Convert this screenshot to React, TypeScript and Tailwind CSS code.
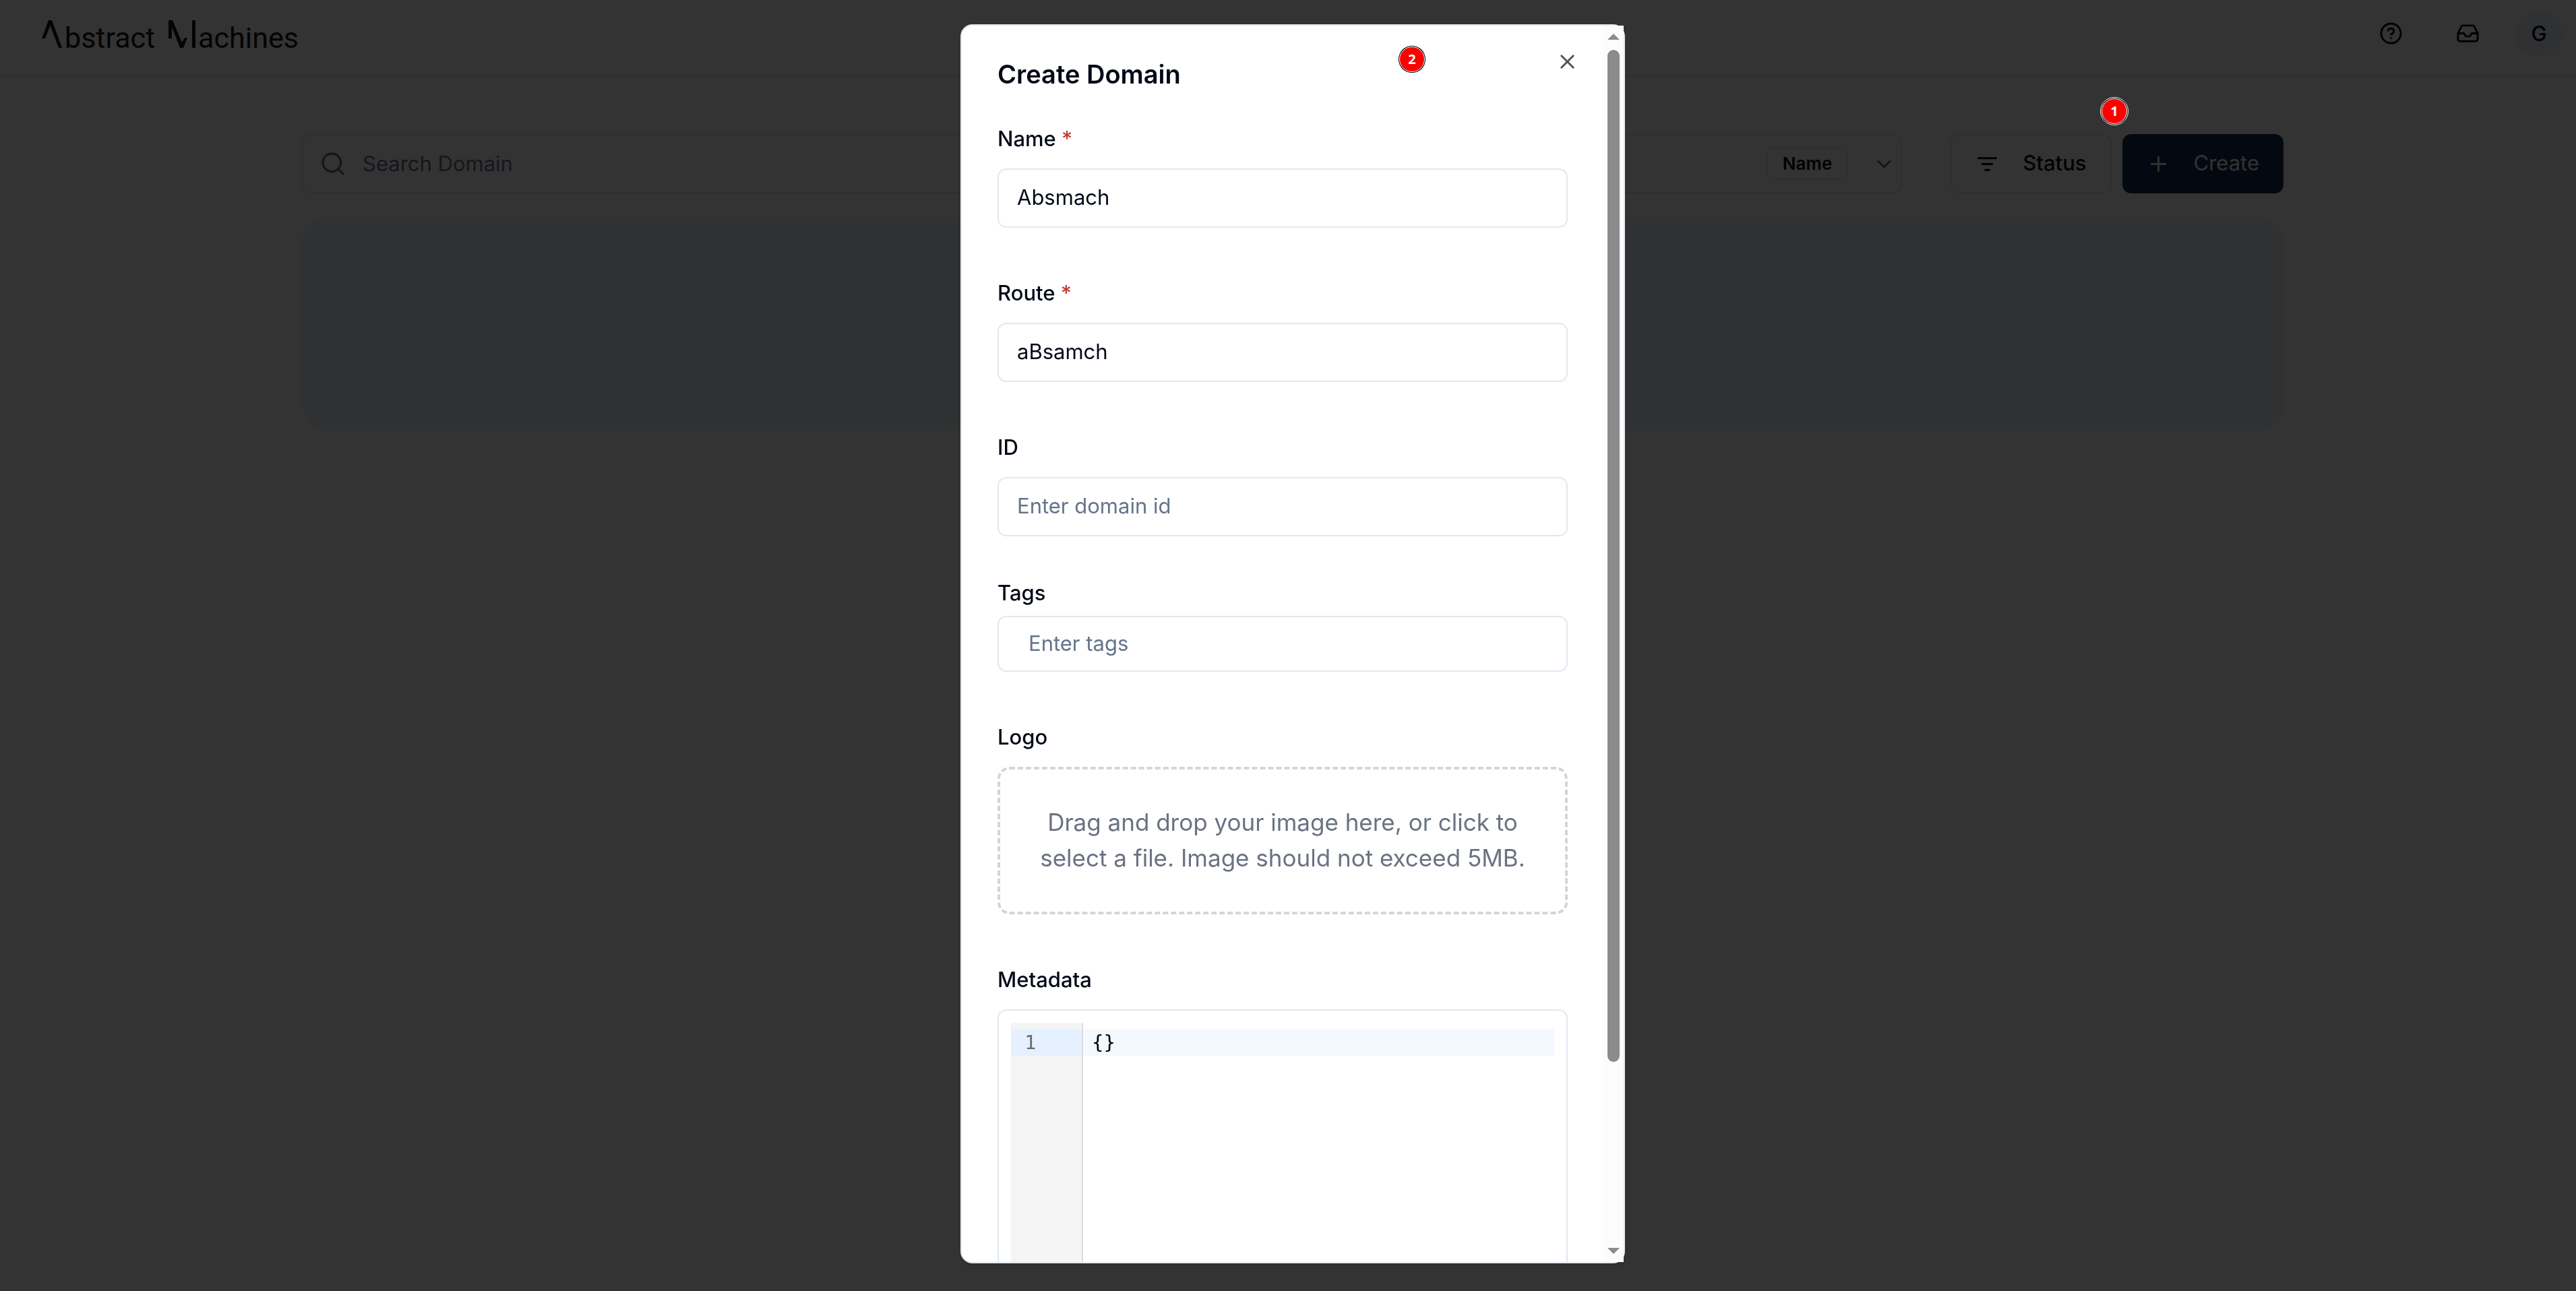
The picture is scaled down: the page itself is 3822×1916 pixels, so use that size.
import React from "react";
import { ChevronDown, CircleHelp, Inbox, Plus, Search, X } from "lucide-react";

function Logo() {
  return (
    <a href="#" aria-label="Abstract Machines" className="flex items-end pt-2 font-['Roboto'] text-[43px] leading-[43px] text-[#141414]">
      <svg viewBox="0 0 30 41" className="mb-[7px] h-[41px] w-[30px]" fill="currentColor" aria-hidden="true">
        <path d="M10 0h5l15 41h-5L12.500 8 5 27H0z" />
      </svg>
      <span className="ml-1">bstract</span>
      <svg viewBox="0 0 40 41" className="mb-[7px] ml-5 h-[41px] w-10" fill="currentColor" aria-hidden="true">
        <path d="M0 0h6l14 33 4-7h4l-6 15h-5L5 10v17H0zM35 0h5v41h-5z" />
      </svg>
      <span className="ml-1">achines</span>
    </a>
  );
}

function FilterIcon() {
  return (
    <svg viewBox="0 0 24 24" className="size-[35px]" fill="none" stroke="currentColor" strokeWidth="2" strokeLinecap="round" aria-hidden="true">
      <path d="M3 6h18M7 12h10M10 18h4" />
    </svg>
  );
}

function Step({ n }: { n: number }) {
  return (
    <span className="flex size-[42px] items-center justify-center rounded-full border border-white bg-black p-px">
      <span className="flex size-full items-center justify-center rounded-full border border-white bg-[#ff0000] font-['Open_Sans'] text-[20px] font-bold text-white">{n}</span>
    </span>
  );
}

function Header() {
  return (
    <header className="flex h-[113px] items-center justify-between border-b-2 border-slate-200 pr-5 pb-3 pl-[62px]">
      <Logo />
      <nav className="flex items-center text-[#020817]">
        <button type="button" aria-label="Help" className="mr-[79px]">
          <CircleHelp className="size-[35px]" />
        </button>
        <button type="button" aria-label="Inbox" className="mr-[53px]">
          <Inbox className="size-[35px]" />
        </button>
        <button type="button" className="flex size-[70px] items-center justify-center rounded-full bg-slate-100 text-[31px] font-medium">G</button>
      </nav>
    </header>
  );
}

function Toolbar() {
  return (
    <div className="flex items-center">
      <div className="flex h-[88px] flex-1 items-center rounded-[13px] border-2 border-slate-200 pr-[7px] pl-6">
        <Search className="size-10 text-[#64748b]" aria-hidden="true" />
        <input aria-label="Search Domain" placeholder="Search Domain" className="ml-6 h-full min-w-0 flex-1 pb-0.5 outline-none placeholder:text-[#64748b]" />
        <button type="button" className="flex items-center">
          <span className="flex h-12 items-center rounded-[9px] border-2 border-slate-200 px-[22px] text-[26px] font-semibold">Name</span>
          <ChevronDown className="ml-9 size-[35px] text-[#64748b]" aria-hidden="true" />
        </button>
      </div>
      <button type="button" className="ml-[72px] flex h-[88px] items-center rounded-[13px] border-2 border-slate-200 px-[35px] font-medium">
        <FilterIcon />
        <span className="ml-[35px] pb-0.5">Status</span>
      </button>
      <button type="button" className="ml-4 flex h-[88px] items-center rounded-[13px] bg-[#142c50] px-9 text-slate-50">
        <Plus className="size-[35px]" aria-hidden="true" />
        <span className="ml-[35px] pb-0.5">Create</span>
      </button>
    </div>
  );
}

const labelClass = "mb-[9px] leading-[70px] font-medium";

function Field({ id, label, required, value, placeholder }: { id: string; label: string; required?: boolean; value?: string; placeholder?: string }) {
  return (
    <div className="flex flex-col">
      <label htmlFor={id} className={labelClass}>
        {label} {required && <span className="text-[#c0392b]">*</span>}
      </label>
      <input id={id} defaultValue={value} placeholder={placeholder} className="h-[88px] rounded-[13px] border-2 border-slate-200 px-[27px] pb-[3px] outline-none placeholder:text-[#64748b]" />
    </div>
  );
}

function Scrollbar() {
  return (
    <div className="flex w-[30px] shrink-0 flex-col items-center bg-[#fcfcfc] py-3 text-[#8b8b8b]" aria-hidden="true">
      <svg viewBox="0 0 18 9" className="h-[9px] w-[18px]" fill="currentColor">
        <path d="M9 0l9 9H0z" />
      </svg>
      <div className="mt-[15px] w-[18px] basis-[1502px] rounded-full bg-[#8b8b8b]" />
      <svg viewBox="0 0 18 9" className="mt-auto h-[9px] w-[18px]" fill="currentColor">
        <path d="M0 0h18L9 9z" />
      </svg>
    </div>
  );
}

function CreateDomainDialog() {
  return (
    <section role="dialog" aria-labelledby="dialog-title" className="relative flex h-[96vh] w-[986px] rounded-[18px] border-2 border-slate-200 bg-white shadow-lg">
      <form className="min-w-0 flex-1 overflow-hidden px-[53px] pt-[52px]">
        <h2 id="dialog-title" className="mb-[41px] text-[38px] leading-10 font-semibold">Create Domain</h2>
        <div className="flex flex-col gap-[62px]">
          <Field id="name" label="Name" required value="Absmach" />
          <Field id="route" label="Route" required value="aBsamch" />
          <Field id="domain-id" label="ID" placeholder="Enter domain id" />
          <div className="flex flex-col">
            <label htmlFor="tags" className="mb-3 leading-[44px] font-medium">Tags</label>
            <input id="tags" placeholder="Enter tags" className="h-[83px] rounded-[13px] border-2 border-slate-200 px-11 pb-[3px] outline-none placeholder:text-[#64748b]" />
          </div>
          <div className="flex flex-col">
            <label htmlFor="logo" className={labelClass}>Logo</label>
            <label className="rounded-[18px] border-4 border-dashed border-gray-300 px-[53px] pt-[52px] pb-[53px] text-center text-[35px] leading-[53px] text-gray-500">
              Drag and drop your image here, or click to select a file. Image should not exceed 5MB.
              <input id="logo" type="file" className="sr-only" />
            </label>
          </div>
          <div className="flex flex-col">
            <label htmlFor="metadata" className={labelClass}>Metadata</label>
            <div className="flex h-[440px] rounded-[13px] border-2 border-slate-200 p-[18px] font-['DejaVu_Sans_Mono',monospace] text-[29px]">
              <div className="w-[107px] border-r-2 border-[#dddddd] bg-[#f5f5f5] pt-[9px] text-[#6c6c6c]">
                <div className="h-10 bg-[#e6f1ff] pl-5 leading-10">1</div>
              </div>
              <div className="flex-1 pt-[9px]">
                <textarea id="metadata" rows={1} defaultValue="{}" className="block h-10 w-full resize-none overflow-hidden bg-[#f4f9ff] pl-[13px] leading-10 text-black outline-none" />
              </div>
            </div>
          </div>
        </div>
      </form>
      <Scrollbar />
      <button type="button" aria-label="Close" className="absolute top-[36px] right-[66px] text-[#4e525d]">
        <X className="size-[35px]" />
      </button>
      <div className="absolute top-[29px] left-[647px]">
        <Step n={2} />
      </div>
    </section>
  );
}

export default function App() {
  return (
    <div className="min-h-screen overflow-hidden bg-white font-['Inter',sans-serif] text-[31px] leading-[44px] text-[#020817]">
      <Header />
      <main className="pt-[86px] pl-[14px]">
        <div className="mx-auto max-w-[2940px]">
          <Toolbar />
          <div className="mt-[35px] h-[317px] rounded-[35px] bg-slate-100" />
        </div>
      </main>
      <div className="fixed inset-0 flex items-start justify-center bg-black/80 pt-9 pl-[14px]">
        <CreateDomainDialog />
      </div>
      <div className="absolute inset-x-0 top-[144px] pl-[14px]">
        <div className="mx-auto flex max-w-[2940px] justify-end pr-[230px]">
          <Step n={1} />
        </div>
      </div>
    </div>
  );
}
